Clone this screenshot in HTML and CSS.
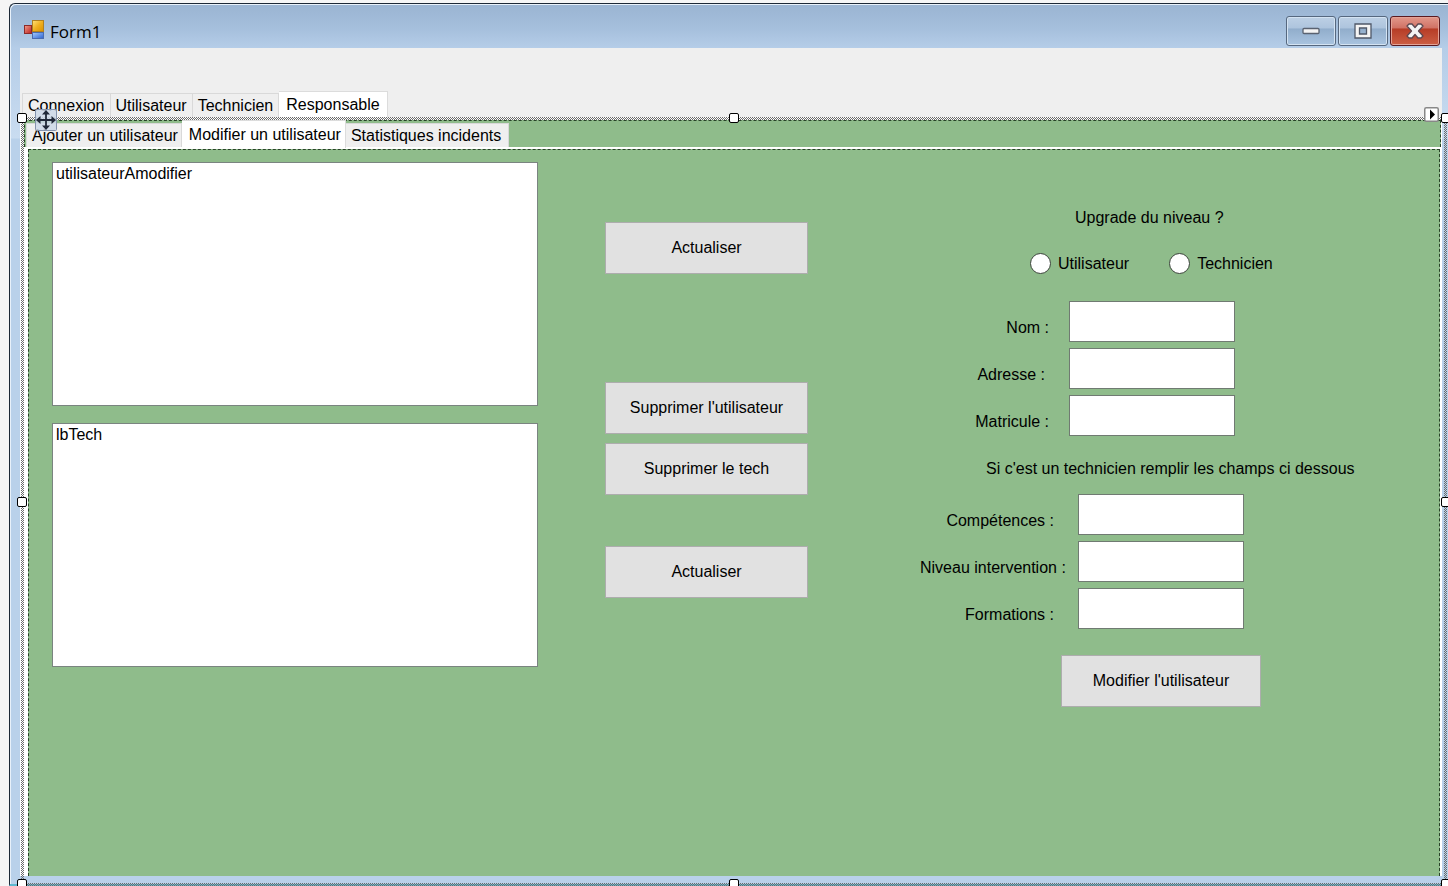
FILE: index.html
```html
<!DOCTYPE html>
<html lang="fr">
<head>
<meta charset="utf-8">
<title>Form1</title>
<link rel="stylesheet" href="styles.css">
</head>
<body>
<div class="window">
  <header class="titlebar">
    <svg class="app-icon" width="22" height="22" viewBox="0 0 22 22" aria-hidden="true">
      <defs>
        <linearGradient id="y" x1="0" y1="0" x2="1" y2="1"><stop offset="0" stop-color="#ffe27a"/><stop offset=".5" stop-color="#f0b020"/><stop offset="1" stop-color="#d89000"/></linearGradient>
        <linearGradient id="r" x1="0" y1="0" x2="1" y2="1"><stop offset="0" stop-color="#f4a08c"/><stop offset="1" stop-color="#b81c1c"/></linearGradient>
        <linearGradient id="b" x1="0" y1="0" x2="1" y2="1"><stop offset="0" stop-color="#a8ccff"/><stop offset="1" stop-color="#2a62d0"/></linearGradient>
      </defs>
      <rect x="1.500" y="5.500" width="7" height="8" fill="url(#r)" stroke="#8c2a2a"/>
      <rect x="9.500" y=".5" width="11" height="11" fill="url(#y)" stroke="#b08020"/>
      <rect x="9.500" y="12.500" width="11" height="6" fill="url(#b)" stroke="#4a6cb0"/>
    </svg>
    <h1 class="caption">Form1</h1>
    <div class="window-buttons">
      <button class="win-btn" type="button" aria-label="Réduire">
        <svg width="18" height="8" viewBox="0 0 18 8"><rect x="1" y="1.500" width="16" height="5" rx="1" fill="#f4f4f4" stroke="#5a6270" stroke-width="1.300"/></svg>
      </button>
      <button class="win-btn" type="button" aria-label="Agrandir">
        <svg width="18" height="16" viewBox="0 0 18 16"><path d="M1 1h16v14H1zM5.500 5v6h7V5z" fill="#f4f4f4" fill-rule="evenodd" stroke="#4f5868" stroke-width="1.300"/></svg>
      </button>
      <button class="win-btn win-close" type="button" aria-label="Fermer">
        <svg width="18" height="16" viewBox="0 0 18 16"><path d="M3 1h3l3 3.500L12 1h3l2 2-4.500 5L17 13l-2 2h-3l-3-3.500L6 15H3l-2-2 4.500-5L1 3z" fill="#f4f4f4" stroke="#5d4850" stroke-width="1.300" stroke-linejoin="round"/></svg>
      </button>
    </div>
  </header>

  <main class="client">
    <div class="tabs tabs-outer" role="tablist">
      <button class="tab" type="button" role="tab">Connexion</button>
      <button class="tab" type="button" role="tab">Utilisateur</button>
      <button class="tab" type="button" role="tab">Technicien</button>
      <button class="tab tab-active" type="button" role="tab" aria-selected="true">Responsable</button>
    </div>

    <section class="page-outer">
      <div class="tabs tabs-inner" role="tablist">
        <button class="tab" type="button" role="tab">Ajouter un utilisateur</button>
        <button class="tab tab-active" type="button" role="tab" aria-selected="true">Modifier un utilisateur</button>
        <button class="tab" type="button" role="tab">Statistiques incidents</button>
      </div>

      <div class="page-inner">
        <div class="lists">
          <select class="listbox" size="4" aria-label="Utilisateurs"><option>utilisateurAmodifier</option></select>
          <select class="listbox" size="4" aria-label="Techniciens"><option>lbTech</option></select>
        </div>

        <div class="actions">
          <button class="btn" type="button">Actualiser</button>
          <div class="action-pair">
            <button class="btn" type="button">Supprimer l'utilisateur</button>
            <button class="btn" type="button">Supprimer le tech</button>
          </div>
          <button class="btn" type="button">Actualiser</button>
        </div>

        <form class="details">
          <fieldset class="level">
            <legend class="level-title">Upgrade du niveau ?</legend>
            <div class="radios">
              <label class="radio"><input type="radio" name="niveau">Utilisateur</label>
              <label class="radio"><input type="radio" name="niveau">Technicien</label>
            </div>
          </fieldset>
          <div class="fields fields-user">
            <label for="nom">Nom :</label><input id="nom" type="text">
            <label class="space-wide" for="adresse">Adresse :</label><input id="adresse" type="text">
            <label for="matricule">Matricule :</label><input id="matricule" type="text">
          </div>
          <p class="hint">Si c'est un technicien remplir les champs ci dessous</p>
          <div class="fields fields-tech">
            <label class="space-wide" for="competences">Compétences :</label><input id="competences" type="text">
            <label class="space-narrow" for="niveau">Niveau intervention :</label><input id="niveau" type="text">
            <label class="space-wide" for="formations">Formations :</label><input id="formations" type="text">
          </div>
          <button class="btn btn-submit" type="button">Modifier l'utilisateur</button>
        </form>
      </div>

      <div class="selection" aria-hidden="true">
        <i class="handle top left"></i><i class="handle top middle"></i><i class="handle top right"></i>
        <i class="handle center left"></i><i class="handle center right"></i>
        <i class="handle bottom left"></i><i class="handle bottom middle"></i><i class="handle bottom right"></i>
        <svg class="move-grip" width="22" height="22" viewBox="0 0 22 22">
          <rect x=".5" y=".5" width="21" height="21" rx="1" fill="#cdd8e8" fill-opacity=".85" stroke="#8493ad"/>
          <path d="M11 4v14M4 11h14" stroke="#202838" stroke-width="1.800"/>
          <path d="M11 1l4 4.500H7zM11 21l4-4.500H7zM1 11l4.500-4v8zM21 11l-4.500-4v8z" fill="#202838"/>
        </svg>
        <svg class="smart-tag" width="15" height="15" viewBox="0 0 15 15">
          <rect x=".75" y=".75" width="13.500" height="13.500" rx="1.500" fill="#fff" stroke="#888" stroke-width="1.500"/>
          <path d="M6 2.500l5 5-5 5z" fill="#000"/>
        </svg>
      </div>
    </section>
  </main>
</div>
</body>
</html>
```
FILE: styles.css
```css
* { box-sizing: border-box; }

body {
  margin: 0;
  min-height: 100vh;
  display: flex;
  flex-direction: column;
  padding: 3px 0 0 9px;
  overflow: hidden;
  background: #f5f5f5;
  color: #000;
  font: 16px/20px "Liberation Sans", Arial, sans-serif;
}

button, input, select { font: inherit; color: inherit; }

/* Window frame */
.window {
  flex: 1;
  display: flex;
  flex-direction: column;
  padding: 0 6px 8px 10px;
  border: 1px solid #1c2836;
  border-right: 0;
  border-bottom: 2px solid #5fb8d0;
  border-top-left-radius: 6px;
  box-shadow: inset 1px 1px 0 #e8f1fa;
  background: linear-gradient(#9ab4d2 0, #a5bfdc 24px, #b5cde8 44px, #c9dcf0 134px, #b9d1ea 135px);
}

.titlebar {
  height: 44px;
  display: flex;
  align-items: center;
  gap: 5px;
  padding-left: 3px;
}

.app-icon { align-self: flex-start; margin-top: 16px; }

.caption {
  margin: 12px 0 0;
  font: 17px/24px "Open Sans", sans-serif;
}

.window-buttons {
  display: flex;
  gap: 2px;
  margin: 9px 2px 0 auto;
}

.win-btn {
  display: flex;
  align-items: center;
  justify-content: center;
  width: 50px;
  height: 30px;
  padding: 0;
  border: 1px solid #56687f;
  border-radius: 3px;
  box-shadow: inset 0 0 0 1px #d4e3f2;
  background: linear-gradient(#bdd0e5 0, #adc4dd 40%, #91adcb 42%, #a9c4e0 100%);
}

.win-close {
  border-color: #5b1a20;
  box-shadow: inset 0 0 0 1px #e3a397;
  background: linear-gradient(#e2988a 0, #d07164 40%, #b63c26 42%, #cc5f45 100%);
}

.client {
  flex: 1;
  display: flex;
  flex-direction: column;
  padding-top: 43px;
  background: #efefef;
}

/* Tabs */
.tabs { display: flex; align-items: flex-end; }

.tab {
  height: 24px;
  padding: 0 5px;
  border: 1px solid #d9d9d9;
  border-bottom: 0;
  border-left-width: 0;
  background: #efefef;
  line-height: 20px;
  white-space: nowrap;
}

.tab:first-child { border-left-width: 1px; }

.tab-active {
  padding: 0 7px;
  border-color: #dcdcdc;
  background: #fff;
}

.tabs-outer { padding-left: 2px; }
.tabs-outer .tab-active { height: 26px; }

.page-outer {
  position: relative;
  flex: 1;
  display: flex;
  flex-direction: column;
  padding: 3px 1px 0 4px;
  background: #fff;
}

.tabs-inner {
  height: 27px;
  padding-left: 1px;
  border: 1px dashed #284228;
  border-bottom: 0;
  background: #8fbc8b;
}

.tabs-inner .tab { padding: 0 3px 0 5px; }
.tabs-inner .tab-active { height: 28px; margin: -1px 0; padding: 0 4px 0 7px; }
.tabs-inner .tab:last-child { padding-right: 7px; }

/* Edit page */
.page-inner {
  flex: 1;
  display: grid;
  grid-template-columns: minmax(0, 486fr) minmax(0, 270fr) minmax(0, 541fr);
  align-items: start;
  margin: 2px 1px 0 4px;
  padding: 12px 90px 24px 23px;
  border: 1px dashed #284228;
  border-bottom: 0;
  background: #8fbc8b;
}

.lists { display: grid; gap: 17px; }

.listbox {
  width: 100%;
  height: 244px;
  padding: 2px 1px;
  border: 1px solid #7a8480;
  border-radius: 0;
  background: #fff;
  overflow: hidden;
}

.actions {
  display: grid;
  gap: 51px;
  padding: 60px 0 0 67px;
}

.action-pair { display: grid; gap: 9px; margin-top: 57px; }

.btn {
  height: 52px;
  padding: 0 8px;
  border: 1px solid #adadad;
  border-radius: 0;
  background: #e1e1e1;
}

.details {
  padding: 46px 0 0 112px;
  white-space: nowrap;
}

.level { margin: 0; padding: 0; border: 0; min-width: 0; }
.level-title { margin-left: 155px; padding: 0; }

.radios {
  display: flex;
  gap: 40px;
  margin: 25px 0 0 110px;
}

.radio { display: flex; align-items: center; gap: 7px; }

.radio input {
  appearance: none;
  width: 21px;
  height: 21px;
  margin: 0;
  border: 1px solid #3c443c;
  border-radius: 50%;
  background: #fff;
}

.radio input:checked { background: radial-gradient(#222 0 5px, #fff 6px); }

.fields { display: grid; row-gap: 6px; }
.fields-user { grid-template-columns: 149px 166px; margin-top: 27px; }
.fields-tech { grid-template-columns: 158px 166px; margin-top: 15px; }

.fields label {
  align-self: center;
  padding: 12px 20px 0 0;
  text-align: right;
}

.fields .space-wide { padding-right: 24px; }
.fields .space-narrow { padding-right: 14px; }

.fields input {
  width: 100%;
  height: 41px;
  padding: 0 6px;
  border: 1px solid #707a72;
  border-radius: 0;
  background: #fff;
}

.hint { margin: 23px 0 0 66px; }

.btn-submit { display: block; width: 200px; margin: 26px 0 0 141px; }

/* Designer selection frame, drawn over the tab control */
.selection {
  position: absolute;
  inset: 0 -5px -10px 1px;
  pointer-events: none;
}

.selection::before {
  content: "";
  position: absolute;
  inset: 0;
  padding: 3px;
  background: conic-gradient(#6c6c6c 25%, transparent 0 50%, #6c6c6c 0 75%, transparent 0) 0 0 / 2px 2px;
  mask: linear-gradient(#000 0 0) content-box exclude, linear-gradient(#000 0 0);
}

.handle {
  position: absolute;
  width: 10px;
  height: 10px;
  border: 1px solid #000;
  border-radius: 2px;
  background: #fff;
}

.handle.top { top: -4px; }
.handle.center { top: calc(50% - 5px); }
.handle.bottom { bottom: -3px; }
.handle.left { left: -4px; }
.handle.middle { left: calc(50% - 5px); }
.handle.right { right: -4px; }

.move-grip { position: absolute; left: 14px; top: -8px; }
.smart-tag { position: absolute; right: 8px; top: -10px; }
```
